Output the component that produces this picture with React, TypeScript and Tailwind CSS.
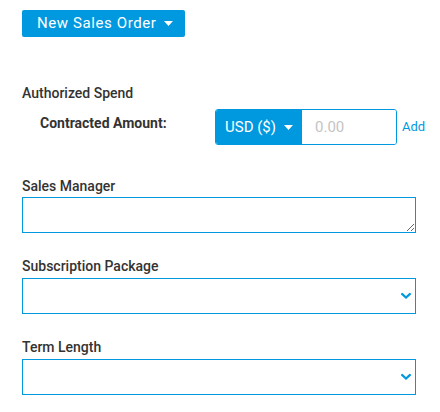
import React from "react";

const Chevron = () => (
  <svg
    className="pointer-events-none absolute right-[5px] top-1/2 -translate-y-1/2"
    width="10"
    height="7"
    viewBox="0 0 10 7"
    fill="none"
  >
    <path d="M1.2 1.5 L5 5 L8.8 1.5" stroke="#0099df" strokeWidth="2.2" strokeLinecap="square" />
  </svg>
);

const Caret = () => (
  <svg width="9" height="5" viewBox="0 0 9 5" className="inline-block">
    <path d="M0 0 L9 0 L4.5 5 Z" fill="white" />
  </svg>
);

function SelectField({ label, mt }: { label: string; mt: string }) {
  return (
    <div className={mt}>
      <div className="h-5 leading-5 text-[14px] font-medium text-[#333] mb-[2px]">{label}</div>
      <div className="relative">
        <select className="block w-full h-[36px] appearance-none border border-[#0099df] bg-white outline-none"></select>
        <Chevron />
      </div>
    </div>
  );
}

export default function App() {
  return (
    <div
      className="w-[440px] h-[412px] bg-white pl-[22px] pt-[10px] overflow-hidden"
      style={{ fontFamily: "Roboto, 'Liberation Sans', sans-serif" }}
    >
      <div className="w-[394px]">
        <button className="flex items-center h-[27px] w-[163px] pl-[15px] bg-[#0099df] text-white text-[15px] tracking-[0.6px] rounded-[2px]">
          <span>New Sales Order</span>
          <span className="ml-[7px] flex items-center pb-[1px]">
            <Caret />
          </span>
        </button>

        <div className="mt-[46px] h-5 leading-5 text-[14px] font-medium text-[#333]">Authorized Spend</div>

        <div className="mt-[6px] flex items-start">
          <div className="shrink-0 w-[193px] pl-[18px] pt-[4px] h-5 leading-5 text-[14px] font-bold text-[#333]">
            Contracted Amount:
          </div>
          <div className="shrink-0 flex h-[36px] w-[182px] rounded-[3px] overflow-hidden border border-[#0099df]">
            <div className="flex items-center w-[86px] h-full bg-[#0099df] text-white text-[15px] pl-[9px]">
              <span>USD ($)</span>
              <span className="ml-[8px] flex items-center">
                <Caret />
              </span>
            </div>
            <input
              className="flex-1 min-w-0 h-full pl-[13px] text-[15px] outline-none placeholder:text-[#c4c4c4] bg-white"
              placeholder="0.00"
            />
          </div>
          <div className="shrink-0 ml-[5px] pt-[8px] text-[13px] text-[#0099df]">Add</div>
        </div>

        <div className="mt-[31px]">
          <div className="h-5 leading-5 text-[14px] font-medium text-[#333] mb-[1px]">Sales Manager</div>
          <textarea className="block w-full h-[36px] border border-[#0099df] outline-none bg-white"></textarea>
        </div>

        <SelectField label="Subscription Package" mt="mt-[23px]" />
        <SelectField label="Term Length" mt="mt-[23px]" />
      </div>
    </div>
  );
}
